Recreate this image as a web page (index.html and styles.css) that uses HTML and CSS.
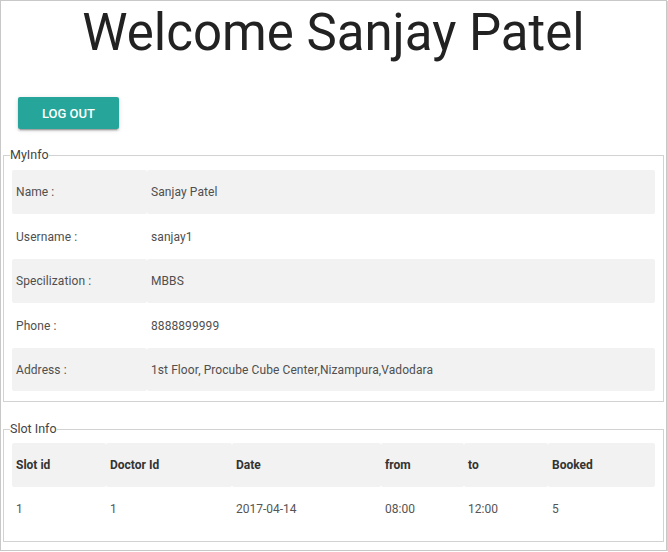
FILE: index.html
```html
<!DOCTYPE html>
<html lang="en">
<head>
<meta charset="utf-8">
<title>Welcome</title>
<link rel="stylesheet" href="styles.css">
</head>
<body>
<div class="page">
  <h1 class="title">Welcome Sanjay Patel</h1>
  <button class="btn" type="button">LOG OUT</button>

  <fieldset class="box box-info">
    <legend class="box-legend">MyInfo</legend>
    <table class="tbl tbl-info">
      <colgroup><col class="c-label"><col></colgroup>
      <tbody>
        <tr class="odd"><td>Name :</td><td>Sanjay Patel</td></tr>
        <tr class="tall"><td>Username :</td><td>sanjay1</td></tr>
        <tr class="odd"><td>Specilization :</td><td>MBBS</td></tr>
        <tr class="tall"><td>Phone :</td><td>8888899999</td></tr>
        <tr class="odd"><td>Address :</td><td>1st Floor, Procube Cube Center,Nizampura,Vadodara</td></tr>
      </tbody>
    </table>
  </fieldset>

  <fieldset class="box box-slot">
    <legend class="box-legend">Slot Info</legend>
    <table class="tbl tbl-slot">
      <colgroup>
        <col class="s1"><col class="s2"><col class="s3"><col class="s4"><col class="s5"><col class="s6">
      </colgroup>
      <thead>
        <tr class="odd"><th>Slot id</th><th>Doctor Id</th><th>Date</th><th>from</th><th>to</th><th>Booked</th></tr>
      </thead>
      <tbody>
        <tr><td>1</td><td>1</td><td>2017-04-14</td><td>08:00</td><td>12:00</td><td>5</td></tr>
      </tbody>
    </table>
  </fieldset>
</div>
</body>
</html>
```

FILE: styles.css
```css
html, body {
  margin: 0;
  padding: 0;
  background: #ffffff;
}

body {
  font-family: Roboto, "Liberation Sans", Arial, sans-serif;
  color: #555555;
}

.page {
  box-sizing: border-box;
  width: 667px;
  height: 551px;
  border: 1px solid #c8c8c8;
  box-shadow: 1px 1px 0 #d4d4d4;
  padding: 2px 2px 0 2px;
  overflow: hidden;
}

.title {
  margin: 0;
  text-align: center;
  font-size: 51px;
  font-weight: 400;
  line-height: 60px;
  color: #222222;
}

.btn {
  display: block;
  margin: 34px 0 0 15px;
  width: 101px;
  height: 32px;
  padding: 0;
  border: none;
  border-radius: 2px;
  background: #26a69a;
  color: #ffffff;
  font-family: Roboto, "Liberation Sans", Arial, sans-serif;
  font-size: 13px;
  font-weight: 500;
  box-shadow: 0 2px 2px 0 rgba(0,0,0,0.14), 0 1px 5px 0 rgba(0,0,0,0.12), 0 3px 1px -2px rgba(0,0,0,0.2);
}

.box {
  margin: 19px 0 0 0;
  padding: 8px 8px 10px 8px;
  border: 1px solid #d2d2d2;
  min-width: 0;
}

.box-slot {
  margin-top: 20px;
  padding-top: 7px;
}

.box-legend {
  margin-left: -2px;
  padding: 0;
  font-size: 12.5px;
  line-height: 14px;
  color: #444444;
}

.tbl {
  width: 643px;
  border-collapse: collapse;
  table-layout: fixed;
  font-size: 12px;
}

.tbl td,
.tbl th {
  height: 44px;
  padding: 0 4px;
  text-align: left;
  vertical-align: middle;
  border-radius: 2px;
  white-space: nowrap;
}

.tbl-info td {
  color: #4f4f4f;
  letter-spacing: 0.08px;
}

.tbl-info tr.tall td {
  height: 45px;
}

.tbl-info tr:nth-child(5) td {
  height: 43px;
}

.tbl tr.odd {
  background: #f2f2f2;
}

.c-label { width: 135px; }

.tbl-slot th {
  font-weight: 700;
  color: #333333;
}

.tbl-slot td {
  color: #555555;
}

.s1 { width: 94px; }
.s2 { width: 126px; }
.s3 { width: 149px; }
.s4 { width: 83px; }
.s5 { width: 84px; }
.s6 { width: 107px; }
```
